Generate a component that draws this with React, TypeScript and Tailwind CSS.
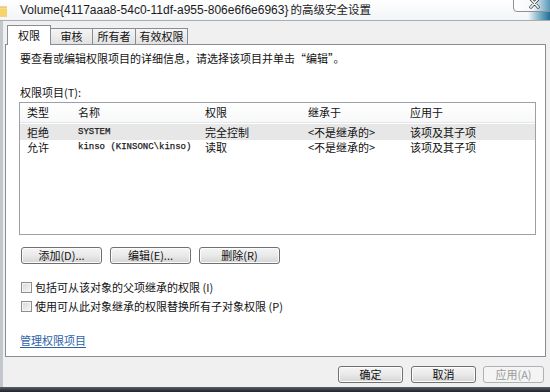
import React from "react";

function Btn({ children, w, disabled }: { children: React.ReactNode; w: string; disabled?: boolean }) {
  return (
    <div
      className={
        "h-[17px] flex items-center justify-center rounded-[3px] border " +
        w +
        (disabled
          ? " border-[#adb2b5] bg-[#f4f4f4] text-[#9a9a9a]"
          : " border-[#707070] bg-gradient-to-b from-[#f5f5f5] via-[#e9e9e9] to-[#d5d5d5] shadow-[inset_0_0_0_1px_#fbfbfb] text-[#111]")
      }
    >
      {children}
    </div>
  );
}

function Check({ label }: { label: string }) {
  return (
    <div className="h-[16px] flex items-center pl-[15px]">
      <div className="w-[11px] h-[11px] border border-[#8f8f8f] bg-gradient-to-br from-[#d8d8d8] to-[#f8f8f8] shadow-[inset_0_0_0_1px_#f4f4f4]" />
      <span className="ml-[3px] text-[#111]">{label}</span>
    </div>
  );
}

export default function App() {
  const mono = "font-['Liberation_Mono',monospace] text-[9px] text-[#1a1a1a] [-webkit-text-stroke:0.25px_#1a1a1a]";
  return (
    <div className="w-[550px] h-[392px] overflow-hidden flex flex-col bg-[#f0f0f0] text-black font-['Noto_Sans_CJK_SC',sans-serif] text-[11px] leading-none">
      {/* title bar */}
      <div className="h-[21px] shrink-0 flex items-center bg-gradient-to-b from-white to-[#f3f5f7] border-b border-[#a9aeb3] relative overflow-hidden">
        <svg viewBox="0 0 16 16" className="-ml-[8px] w-[16px] h-[16px] shrink-0">
          <path d="M1 3h5l1.5 1.5H15v10H1z" fill="#e0b23a" />
          <path d="M1 6h14v8.5H1z" fill="#f6d36b" />
          <path d="M1 6h14" stroke="#fbe9a6" strokeWidth="1" />
        </svg>
        <span className="ml-[12px] font-['Liberation_Sans',sans-serif] text-[12px] text-[#1a1a1a] whitespace-nowrap">
          Volume{"{"}4117aaa8-54c0-11df-a955-806e6f6e6963{"}"}{" "}
        </span>
        <span className="font-['Noto_Sans_CJK_SC',sans-serif] text-[11.5px] text-[#1a1a1a] whitespace-nowrap ml-[2px]">
          的高级安全设置
        </span>
        <div className="absolute right-0 top-0 h-[21px] w-[22px] bg-gradient-to-r from-transparent via-[#7fb3c8] to-[#1f6f96]" />
        <div className="absolute right-[-3px] top-[-2px] w-[40px] h-[14px] border border-[#8d9199] rounded-b-[4px] bg-gradient-to-r from-white via-[#f4f7f9] to-[#3f8db1] flex items-center justify-center">
          <svg viewBox="0 0 12 12" className="w-[11px] h-[11px] -mt-[4px] ml-[2px]">
            <path d="M2 1 L10 10 M10 1 L2 10" stroke="#3a3f45" strokeWidth="3.4" strokeLinecap="round" />
            <path d="M2 1 L10 10 M10 1 L2 10" stroke="#f4f4f4" strokeWidth="1.8" strokeLinecap="round" />
          </svg>
        </div>
      </div>

      {/* body */}
      <div className="flex-1 flex flex-col border-l-[3px] border-[#c3c7cb] pl-[2px] pr-[4px]">
        {/* tabs */}
        <div className="h-[19px] mt-[4px] flex items-end pl-[2px] text-[#111]">
          <div className="relative z-10 -mb-[1px] h-[20px] w-[44px] bg-white border border-b-0 border-[#898c95] flex items-center justify-center pb-[1px]">
            权限
          </div>
          <div className="h-[16px] w-[42px] border-t border-r border-[#898c95] bg-gradient-to-b from-[#f5f5f5] to-[#e2e2e2] flex items-center justify-center">
            审核
          </div>
          <div className="h-[16px] w-[43px] border-t border-r border-[#898c95] bg-gradient-to-b from-[#f5f5f5] to-[#e2e2e2] flex items-center justify-center">
            所有者
          </div>
          <div className="h-[16px] w-[52px] border-t border-r border-[#898c95] bg-gradient-to-b from-[#f5f5f5] to-[#e2e2e2] flex items-center justify-center">
            有效权限
          </div>
        </div>

        {/* panel */}
        <div className="h-[313px] bg-white border border-[#898c95] flex flex-col text-[#111]">
          <div className="mt-[6px] h-[14px] flex items-center pl-[14px]">
            要查看或编辑权限项目的详细信息，请选择该项目并单击“编辑”。
          </div>
          <div className="mt-[20px] h-[14px] flex items-center pl-[14px]">权限项目(T):</div>
          <div className="mt-[3px] ml-[13px] w-[517px] h-[133px] border border-[#9ca0a7] flex flex-col">
            <div className="h-[20px] grid grid-cols-[51px_127px_103px_102px_1fr] items-center pl-[7px] bg-gradient-to-b from-white to-[#f7f8f9] border-b border-[#e5e5e5]">
              <span>类型</span>
              <span>名称</span>
              <span>权限</span>
              <span>继承于</span>
              <span>应用于</span>
            </div>
            <div className="mt-[1px] h-[16px] grid grid-cols-[51px_127px_103px_102px_1fr] items-center pl-[7px] bg-[#e7e7e7]">
              <span>拒绝</span>
              <span className={mono}>SYSTEM</span>
              <span>完全控制</span>
              <span>&lt;不是继承的&gt;</span>
              <span>该项及其子项</span>
            </div>
            <div className="h-[15px] grid grid-cols-[51px_127px_103px_102px_1fr] items-center pl-[7px]">
              <span>允许</span>
              <span className={mono + " whitespace-pre"}>kinso (KINSONC\kinso)</span>
              <span>读取</span>
              <span>&lt;不是继承的&gt;</span>
              <span>该项及其子项</span>
            </div>
          </div>

          <div className="mt-[12px] ml-[15px] flex gap-[8px]">
            <Btn w="w-[81px]">添加(D)...</Btn>
            <Btn w="w-[81px]">编辑(E)...</Btn>
            <Btn w="w-[81px]">删除(R)</Btn>
          </div>

          <div className="mt-[15px]">
            <Check label="包括可从该对象的父项继承的权限 (I)" />
          </div>
          <div className="mt-[3px]">
            <Check label="使用可从此对象继承的权限替换所有子对象权限 (P)" />
          </div>

          <div className="mt-[19px] h-[14px] flex items-center pl-[14px]">
            <span className="text-[#2a62a8] underline underline-offset-2">管理权限项目</span>
          </div>
        </div>

        {/* bottom buttons */}
        <div className="mt-[9px] flex justify-end pr-[2px]">
          <Btn w="w-[65px]">确定</Btn>
          <div className="w-[8px]" />
          <Btn w="w-[65px]">取消</Btn>
          <div className="w-[7px]" />
          <Btn w="w-[61px]" disabled>
            应用(A)
          </Btn>
        </div>
      </div>
      <div className="h-[5px] shrink-0 bg-gradient-to-b from-[#5a6168] to-[#1e2328]" />
    </div>
  );
}
